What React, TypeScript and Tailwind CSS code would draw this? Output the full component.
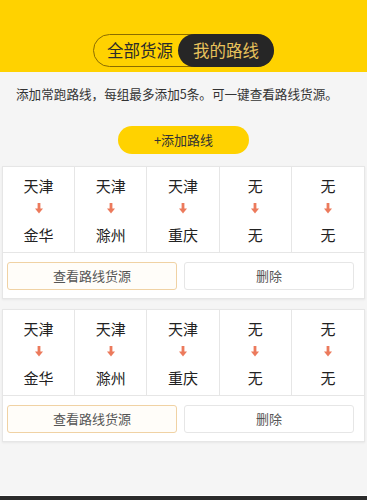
import React from 'react'

const font = { fontFamily: '"Noto Sans CJK SC", "Noto Sans", sans-serif' }

type Route = { from: string; to: string }

const routes: Route[] = [
  { from: '天津', to: '金华' },
  { from: '天津', to: '滁州' },
  { from: '天津', to: '重庆' },
  { from: '无', to: '无' },
  { from: '无', to: '无' },
]

function DownArrow() {
  return (
    <svg width="8" height="11" viewBox="0 0 8 11" className="block">
      <rect x="2.6" y="0" width="2.8" height="6" fill="#ec7a5c" />
      <path d="M0 5.5 L8 5.5 L4 10.5 Z" fill="#ec7a5c" />
    </svg>
  )
}

function RouteCard() {
  return (
    <div className="mx-[2px] bg-white border border-[#e6e6e6] shadow-[0_1px_2px_rgba(0,0,0,0.06)]">
      {/* 路线格子 */}
      <div className="grid grid-cols-5 border-b border-[#e6e6e6]">
        {routes.map((r, i) => (
          <div
            key={i}
            className={`flex h-[85px] flex-col items-center pt-[9px] ${
              i < 4 ? 'border-r border-[#e6e6e6]' : ''
            }`}
          >
            <div className="text-[15px] leading-[20px] text-[#222]">{r.from}</div>
            <div className="mt-[7px] flex h-[11px] items-center">
              <DownArrow />
            </div>
            <div className="mt-[11px] text-[15px] leading-[20px] text-[#222]">{r.to}</div>
          </div>
        ))}
      </div>
      {/* 按钮 */}
      <div className="flex gap-[7px] pl-[4px] pt-[9px] pb-[8px]">
        <button className="h-[28px] w-[170px] rounded-[3px] border border-[#f0d2a4] bg-[#fffdf9] text-[13px] text-[#555]">
          查看路线货源
        </button>
        <button className="h-[28px] w-[170px] rounded-[3px] border border-[#e6e6e6] bg-white text-[13px] text-[#555]">
          删除
        </button>
      </div>
    </div>
  )
}

export default function App() {
  return (
    <div className="flex h-[500px] w-full flex-col overflow-hidden bg-[#f5f5f5]" style={font}>
      {/* 顶部切换 */}
      <div className="flex h-[72px] items-end justify-center bg-[#ffd200] pb-[5px]">
        <div className="flex h-[33px] items-center rounded-full border border-[#8a6c00]">
          <span className="pl-[13px] pr-[5px] text-[16.5px] text-[#2b2b2b]">全部货源</span>
          <span className="-mr-px flex h-[33px] items-center rounded-full bg-[#262626] px-[15px] text-[16.5px] text-[#e8c25c]">
            我的路线
          </span>
        </div>
      </div>

      <div className="flex-1">
        <p className="pl-[16px] pt-[13px] text-[12.6px] leading-[18px] text-[#333]">
          添加常跑路线，每组最多添加5条。可一键查看路线货源。
        </p>

        <div className="flex justify-center pt-[23px]">
          <button className="h-[28px] w-[131px] rounded-full bg-[#ffd200] text-[13px] text-[#333]">
            +添加路线
          </button>
        </div>

        <div className="mt-[12px] flex flex-col gap-[10px]">
          <RouteCard />
          <RouteCard />
        </div>
      </div>

      <div className="h-[5px] border-t border-white bg-[#2b2b2b]" />
    </div>
  )
}
